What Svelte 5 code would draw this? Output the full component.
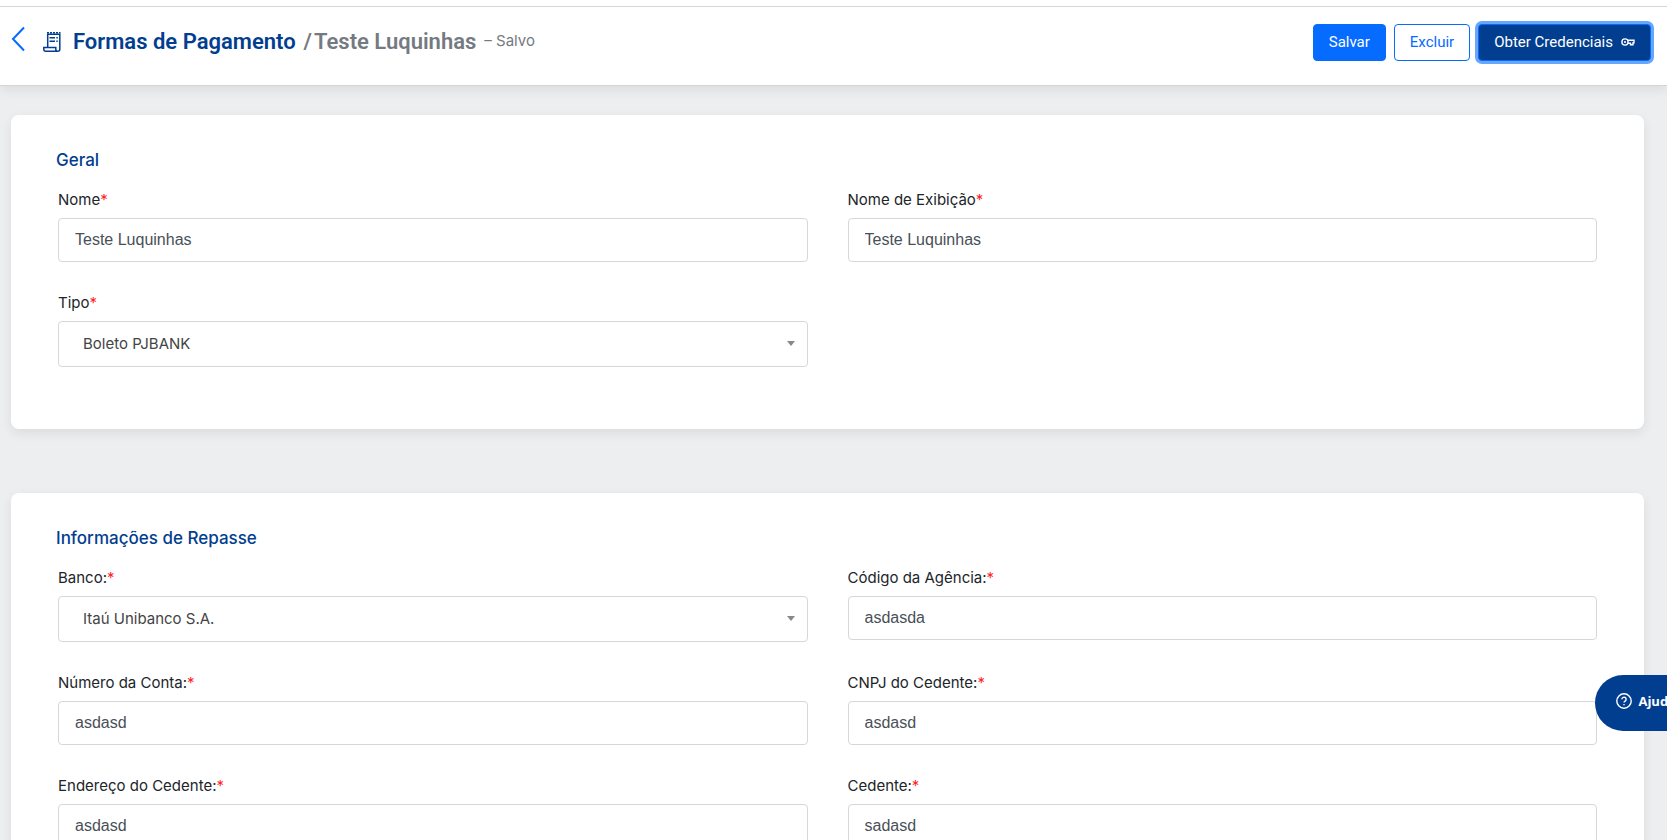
<script>
  let general = $state({
    name: 'Teste Luquinhas',
    displayName: 'Teste Luquinhas',
    type: 'Boleto PJBANK'
  })

  let transfer = $state({
    bank: 'Itaú Unibanco S.A.',
    agency: 'asdasda',
    account: 'asdasd',
    cnpj: 'asdasd',
    address: 'asdasd',
    assignor: 'sadasd'
  })
</script>

{#snippet label(id, text)}
  <label for={id}>{text}<span class="required">*</span></label>
{/snippet}

{#snippet input(id, text, data, key)}
  <div class="field">
    {@render label(id, text)}
    <input {id} type="text" bind:value={data[key]} required />
  </div>
{/snippet}

{#snippet select(id, text, data, key, options)}
  <div class="field">
    {@render label(id, text)}
    <div class="select">
      <select {id} bind:value={data[key]} required>
        {#each options as option}
          <option value={option}>{option}</option>
        {/each}
      </select>
    </div>
  </div>
{/snippet}

<div class="page">
  <header>
    <a class="back" href="#formas" aria-label="Voltar">
      <svg width="14" height="26" viewBox="0 0 14 26">
        <path d="M13 1.5 L2 13 L13 24.5" />
      </svg>
    </a>
    <svg class="receipt" width="18" height="20" viewBox="0 0 18 20">
      <path d="M4.7 15V2.2H16.8V17.2a2 2 0 0 1-2 2H2.8a2 2 0 0 1-2-2V15.6H12.8V17.2a2 2 0 0 0 2 2" />
      <path class="teeth" d="M4 .8H17.5" />
      <path d="M6.5 5.8H12M6.5 9.3H12M13.3 5.8h1.5M13.3 9.3h1.5" />
    </svg>
    <h1>Formas de Pagamento</h1>
    <h2><span>/</span>Teste Luquinhas</h2>
    <span class="status">– Salvo</span>
    <div class="actions">
      <button type="button" class="primary">Salvar</button>
      <button type="button">Excluir</button>
      <button type="button" class="primary active">
        Obter Credenciais
        <svg width="14" height="8" viewBox="0 0 14 8">
          <circle cx="4" cy="4" r="3.1" />
          <circle class="dot" cx="4" cy="4" r="1.1" />
          <path d="M6.5 2.3H13V4.8H12V6.8H9.5V5.2H6.8" />
        </svg>
      </button>
    </div>
  </header>

  <main>
    <section class="general">
      <h3>Geral</h3>
      <div class="grid">
        {@render input('name', 'Nome', general, 'name')}
        {@render input('display-name', 'Nome de Exibição', general, 'displayName')}
        {@render select('type', 'Tipo', general, 'type', ['Boleto PJBANK'])}
      </div>
    </section>

    <section>
      <h3>Informações de Repasse</h3>
      <div class="grid">
        {@render select('bank', 'Banco:', transfer, 'bank', ['Itaú Unibanco S.A.'])}
        {@render input('agency', 'Código da Agência:', transfer, 'agency')}
        {@render input('account', 'Número da Conta:', transfer, 'account')}
        {@render input('cnpj', 'CNPJ do Cedente:', transfer, 'cnpj')}
        {@render input('address', 'Endereço do Cedente:', transfer, 'address')}
        {@render input('assignor', 'Cedente:', transfer, 'assignor')}
      </div>
    </section>
  </main>

  <button type="button" class="help">
    <svg width="16" height="16" viewBox="0 0 16 16">
      <circle cx="8" cy="8" r="7.2" />
      <path d="M5.9 6.3a2.1 2.1 0 1 1 3.2 1.8C8.3 8.6 8 8.9 8 9.6M8 11v1.3" />
    </svg>
    Ajuda
  </button>
</div>

<style>
  :global(body) {
    margin: 0;
    background: #edeef0;
  }
  .page {
    height: 100vh;
    overflow-x: hidden;
    overflow-y: auto;
    scrollbar-width: none;
    border-top: 6px solid #fff;
    box-sizing: border-box;
    font-family: Inter, 'Noto Sans', sans-serif;
  }
  header {
    position: relative;
    display: flex;
    align-items: center;
    height: 80px;
    box-sizing: border-box;
    padding: 0 16px 8px 11px;
    background: #fff;
    border-top: 1px solid #d5d6d8;
    border-bottom: 1px solid #d3d5d6;
    box-shadow: 0 4px 12px rgba(0, 0, 0, 0.08);
  }
  svg {
    display: block;
    flex: none;
    fill: none;
    stroke: currentColor;
  }
  .back {
    padding-bottom: 6px;
    color: #066bff;
    stroke-width: 2;
  }
  .receipt {
    margin: 0 12px 0 18px;
    color: #023e8f;
    stroke-width: 1.5;
  }
  .teeth {
    stroke-dasharray: 2 1;
  }
  h1,
  h2 {
    margin: 0;
    font: 600 22px/30px Roboto, sans-serif;
    white-space: nowrap;
  }
  h1 {
    color: #023e8f;
  }
  h2 {
    margin-left: 8px;
    color: #757a82;
  }
  h2 span {
    margin-right: 2px;
  }
  .status {
    margin-left: 8px;
    padding-bottom: 3px;
    color: #757a82;
    font-size: 15px;
  }
  .actions {
    display: flex;
    gap: 8px;
    margin-left: auto;
  }
  .actions button {
    display: flex;
    align-items: center;
    gap: 8px;
    height: 37px;
    padding: 0 15px;
    border: 1px solid #066bff;
    border-radius: 4px;
    background: #fff;
    color: #066bff;
    font: 15px/24px Roboto, sans-serif;
    white-space: nowrap;
  }
  .actions .primary {
    background: #066bff;
    color: #fff;
  }
  .actions .active {
    background: #023e8f;
    box-shadow: 0 0 0 3px #66a6ff;
  }
  .actions svg {
    stroke-width: 1.4;
  }
  .actions .dot {
    fill: currentColor;
    stroke: none;
  }
  main {
    display: grid;
    gap: 64px;
    padding: 29px 23px 64px 11px;
  }
  section {
    padding: 33px 47px 32px;
    border-radius: 8px;
    background: #fff;
    box-shadow: 0 4px 12px rgba(0, 0, 0, 0.08);
  }
  .general {
    padding-bottom: 62px;
  }
  h3 {
    margin: 0 -2px 16px;
    color: #023e8f;
    font-size: 17px;
    font-weight: 500;
    line-height: 24px;
  }
  .grid {
    display: grid;
    grid-template-columns: 1fr 1fr;
    gap: 29px 40px;
  }
  .field {
    min-width: 0;
  }
  label {
    display: block;
    margin-bottom: 6px;
    color: #212529;
    font-size: 15px;
    line-height: 24px;
  }
  .required {
    color: #f22;
  }
  input,
  select {
    display: block;
    width: 100%;
    box-sizing: border-box;
    border: 1px solid #d5d7da;
    border-radius: 4px;
    background: #fff;
  }
  input {
    height: 44px;
    padding: 0 16px;
    color: #495057;
    font: 16px/24px 'Liberation Sans', Arial, sans-serif;
  }
  .select {
    position: relative;
  }
  .select::after {
    content: '';
    position: absolute;
    top: 20px;
    right: 13px;
    border: 4px solid transparent;
    border-top: 5px solid #888;
    border-bottom: 0;
    pointer-events: none;
  }
  select {
    appearance: none;
    height: 46px;
    padding: 0 24px;
    color: #444;
    font: 15px/24px Inter, 'Noto Sans', sans-serif;
  }
  .help {
    position: fixed;
    top: 675px;
    right: -25px;
    display: flex;
    align-items: center;
    gap: 6px;
    height: 56px;
    padding: 0 16px 4px 21px;
    border: 0;
    border-radius: 28px 0 0 28px;
    background: #023e8f;
    color: #fff;
    font: 700 13px/20px 'Open Sans', sans-serif;
  }
  .help svg {
    stroke-width: 1.4;
  }
</style>
